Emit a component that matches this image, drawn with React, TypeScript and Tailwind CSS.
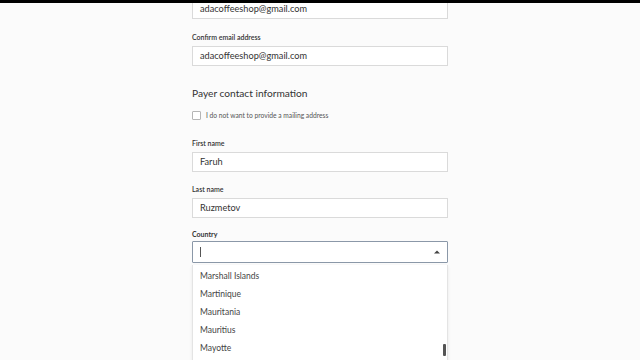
import React from "react";

const countries = ["Marshall Islands", "Martinique", "Mauritania", "Mauritius", "Mayotte"];

function Field({ label, value }: { label: string; value: string }) {
  return (
    <div className="flex flex-col">
      <label className="text-[7px] font-semibold leading-[8px] text-[#333]">{label}</label>
      <div className="mt-[5px] flex h-[20px] items-center border border-[#dadada] bg-white px-[7px] text-[9.2px] text-[#333]">
        {value}
      </div>
    </div>
  );
}

export default function App() {
  return (
    <div className="relative h-[360px] w-[640px] overflow-hidden bg-[#fbfbfb]" style={{ fontFamily: "Lato, 'Open Sans', sans-serif" }}>
      <div className="relative z-10 h-[3px] w-full bg-black" />
      <div className="mx-auto flex w-[256px] flex-col">
        <div className="-mt-[4px] flex h-[20px] items-center border border-[#dadada] bg-white px-[7px] text-[9.2px] text-[#333]">
          adacoffeeshop@gmail.com
        </div>
        <div className="mt-[14px]">
          <Field label="Confirm email address" value="adacoffeeshop@gmail.com" />
        </div>
        <h2 className="mt-[20px] text-[10.2px] leading-[14px] text-[#333]">Payer contact information</h2>
        <div className="mt-[10px] flex items-center gap-[5px]">
          <div className="h-[9px] w-[9px] rounded-[1px] border border-[#b5b5b5] bg-white" />
          <span className="text-[6.7px] text-[#555]">I do not want to provide a mailing address</span>
        </div>
        <div className="mt-[19px]">
          <Field label="First name" value="Faruh" />
        </div>
        <div className="mt-[13px]">
          <Field label="Last name" value="Ruzmetov" />
        </div>
        <div className="mt-[12px] flex flex-col">
          <label className="text-[7px] font-bold leading-[8px] text-[#333]">Country</label>
          <div className="mt-[3px] flex h-[22px] items-center justify-between rounded-[1px] border border-[#8b98a8] bg-white pl-[7px] pr-[7px]">
            <span className="h-[10px] w-[1px] bg-[#555]" />
            <svg width="6" height="4" viewBox="0 0 6 4">
              <path d="M0 3.5 L3 0.5 L6 3.5 Z" fill="#444" />
            </svg>
          </div>
          <div className="relative mt-[2px] flex h-[100px] flex-col border-x border-[#e4e4e4] bg-white pt-[2px] shadow-[0_1px_3px_rgba(0,0,0,0.08)]">
            {countries.map((c) => (
              <div key={c} className="flex h-[18px] items-center px-[7px] text-[8.5px] text-[#444]">
                {c}
              </div>
            ))}
            <div className="absolute right-[1px] top-[79px] h-[12px] w-[3px] rounded-[1px] bg-[#555]" />
          </div>
        </div>
      </div>
    </div>
  );
}
